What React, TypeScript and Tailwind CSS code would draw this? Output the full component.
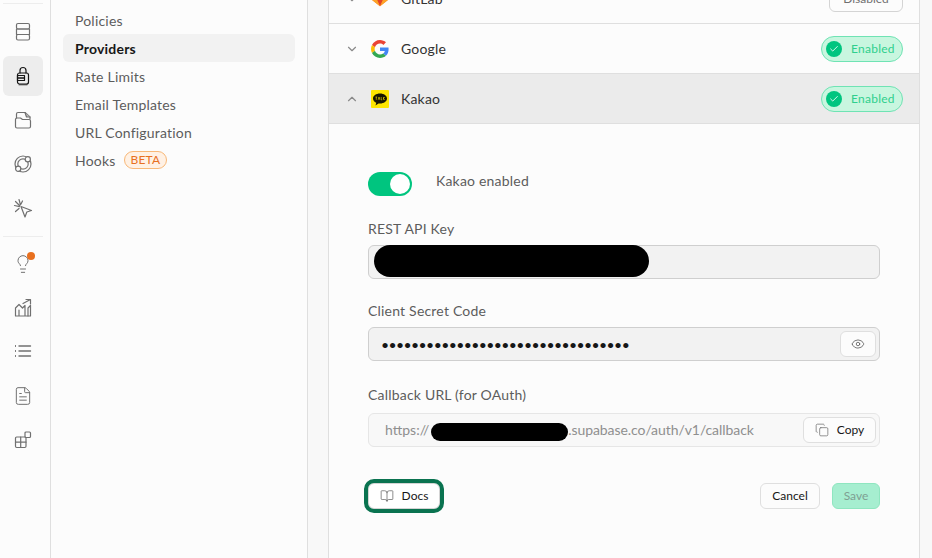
import React from "react";
import { ChevronDown, ChevronUp, Eye, Copy, BookOpen, Lightbulb, FileText, Check } from "lucide-react";

const S = { fill: "none", stroke: "currentColor", strokeWidth: 1.2, strokeLinecap: "round" as const, strokeLinejoin: "round" as const };

function Ico({ children }: { children: React.ReactNode }) {
  return <svg width="20" height="20" viewBox="0 0 20 20" {...S}>{children}</svg>;
}

const DbIcon = () => (
  <Ico>
    <rect x="3.500" y="1.500" width="13" height="5.500" rx="1.500" />
    <rect x="3.500" y="7" width="13" height="5.500" />
    <rect x="3.500" y="12.500" width="13" height="5.500" rx="1.500" />
  </Ico>
);
const AuthIcon = () => (
  <Ico>
    <path d="M7 7V4.500a3 3 0 0 1 6 0V7" />
    <rect x="4.500" y="7" width="11" height="11" rx="2" />
    <rect x="4.500" y="9.500" width="7" height="2.500" />
    <rect x="4.500" y="12" width="7" height="2.500" />
    <path d="M6 18.800h8" strokeWidth="0.800" />
  </Ico>
);
const StorageIcon = () => (
  <Ico>
    <path d="M3.500 8V4a1.500 1.500 0 0 1 1.500-1.500h7L17 7v2" />
    <path d="M2.500 9.500A1.500 1.500 0 0 1 4 8h3.500l2 1.500h6.500A1.500 1.500 0 0 1 17.500 11v5.500A1.500 1.500 0 0 1 16 18H4a1.500 1.500 0 0 1-1.500-1.500z" />
    <path d="M12 2.500 13.500 7H17" fill="#bdbdbd" />
  </Ico>
);
const RealtimeIcon = () => (
  <Ico>
    <circle cx="10" cy="10" r="8" />
    <circle cx="10" cy="10" r="5.200" />
    <circle cx="14.800" cy="5.200" r="2.600" fill="#fcfcfc" />
    <circle cx="5.200" cy="14.800" r="2.600" fill="#fcfcfc" />
  </Ico>
);
const EdgeIcon = () => (
  <Ico>
    <path d="M8 8.500 18.500 12.500l-4.700 1.500L12 19z" />
    <path d="M6 1.500 7.500 7M1.500 7.500l5 1.200M9.500 3 8 6M2.500 13.500l3.500-3M2.500 3.500 6.500 7.500" />
  </Ico>
);
const ReportsIcon = () => (
  <Ico>
    <path d="M2.500 18V10l3.500-3.500 3.500 3.500 2.500-2.500V18M2.500 18h15V7.500M6 18v-6M12 18v-5.500" />
    <path d="M10 5.500 16.500 2M13 1.500h4.500V6" />
    <path d="M15 18v-8l2.500-2.500" />
  </Ico>
);
const ListIcon = () => (
  <Ico>
    <path d="M6 4h11.500M6 9h11.500M6 14h11.500M6 11.500" strokeWidth="1.400" />
    <path d="M2.500 3.500v1M2.500 8.500v1M2.500 13.500v1" strokeWidth="1" />
  </Ico>
);
const IntegrationIcon = () => (
  <Ico>
    <rect x="2.500" y="7" width="10.500" height="10.500" rx="1.200" />
    <path d="M7.700 7v10.500M2.500 12.200h10.500" />
    <rect x="12" y="2" width="5.500" height="5.500" rx="1" />
  </Ico>
);

function Rail({ active, children, dot }: { active?: boolean; children: React.ReactNode; dot?: boolean }) {
  return (
    <div className={`relative flex h-10 w-10 items-center justify-center rounded-md ${active ? "bg-[#ededed] text-[#171717]" : "text-[#707070]"}`}>
      {children}
      {dot && <span className="absolute left-[24px] top-[8px] h-2 w-2 rounded-full bg-[#e8701f]" />}
    </div>
  );
}

function Enabled() {
  return (
    <div className="flex h-[26px] w-[82px] items-center rounded-full border border-[#6fe3b4] bg-[#c8f6df] pl-[4px] text-[12px] tracking-[0.25px] text-[#2fcf8d]">
      <span className="flex h-4 w-4 items-center justify-center rounded-full bg-[#00c57f] text-white">
        <Check size={10} strokeWidth={2} />
      </span>
      <span className="ml-[9px]">Enabled</span>
    </div>
  );
}

const GoogleLogo = () => (
  <svg width="18" height="18" viewBox="0 0 48 48">
    <path fill="#EA4335" d="M24 9.500c3.500 0 6.700 1.300 9.100 3.500l6.800-6.800C35.800 2.400 30.200 0 24 0 14.600 0 6.500 5.400 2.600 13.200l7.900 6.100C12.400 13.700 17.700 9.500 24 9.500z" />
    <path fill="#4285F4" d="M46.900 24.500c0-1.600-.1-3.100-.4-4.500H24v9h12.900c-.6 3-2.200 5.500-4.700 7.200l7.700 6c4.500-4.200 7-10.300 7-17.700z" />
    <path fill="#FBBC05" d="M10.500 28.700A14.400 14.400 0 0 1 9.700 24c0-1.600.3-3.200.8-4.700l-7.900-6.100A24 24 0 0 0 0 24c0 3.900.9 7.500 2.600 10.800z" />
    <path fill="#34A853" d="M24 48c6.500 0 11.900-2.100 15.900-5.800l-7.700-6c-2.200 1.500-4.900 2.300-8.200 2.300-6.300 0-11.600-4.200-13.500-9.800l-7.900 6.100C6.500 42.600 14.600 48 24 48z" />
  </svg>
);

const KakaoLogo = () => (
  <svg width="18" height="18" viewBox="0 0 18 18">
    <rect width="18" height="18" rx="1" fill="#fee500" />
    <path d="M9 3.500c-4 0-7 2.200-7 5 0 1.800 1.300 3.400 3.200 4.300l-.7 2.600 3-2c.5.100 1 .1 1.500.1 4 0 7-2.200 7-5s-3-5-7-5z" fill="#191600" />
    <path d="M4.500 7h1.600M5.300 7v2.800M7.200 9.800 8 7l.8 2.800M10.200 7v2.800h1M12.500 7v2.800M12.500 8.500l1.200-1.500M12.500 8.500l1.200 1.300" stroke="#fee500" strokeWidth=".6" fill="none" />
  </svg>
);

const GitlabLogo = () => (
  <svg width="22" height="22" viewBox="0 0 22 22">
    <path d="M11 20 1 12 3.500 3l3 7h9l3-7L21 12z" fill="#fc6d26" />
    <path d="M11 20 6.500 10h9z" fill="#e24329" />
    <path d="M11 20 1 12l5.500-2zM11 20l10-8-5.500-2z" fill="#fca326" />
  </svg>
);

function Row({ open, logo, name, badge }: { open?: boolean; logo: React.ReactNode; name: string; badge: React.ReactNode }) {
  return (
    <div className={`flex h-[50px] items-center border-b border-[#dfdfdf] pl-[16px] pr-4 ${open ? "bg-[#ebebeb]" : ""}`}>
      {open ? <ChevronUp size={14} className="text-[#8a8a8a]" /> : <ChevronDown size={14} className="text-[#8a8a8a]" />}
      <span className="ml-[12px] flex w-[18px] items-center justify-center">{logo}</span>
      <span className="ml-[12px] flex-1 text-[14px] tracking-[0.2px] text-[#333]">{name}</span>
      {badge}
    </div>
  );
}

function Label({ children }: { children: React.ReactNode }) {
  return <div className="h-[20px] text-[14px] leading-[20px] tracking-[0.2px] text-[#5c5c5c]">{children}</div>;
}

const dots = "•••••••••••••••••••••••••••••••••";

export default function App() {
  return (
    <div className="flex h-[558px] w-[932px] overflow-hidden bg-[#f8f8f8]" style={{ fontFamily: "Lato, sans-serif" }}>
      <aside className="flex w-[51px] shrink-0 flex-col items-start border-r border-[#dfdfdf] bg-[#fcfcfc] pl-[3px] pt-[3px]">
        <div className="h-px w-10 bg-[#ededed]" />
        <div className="mt-[8px] flex flex-col gap-1">
          <Rail><DbIcon /></Rail>
          <Rail active><AuthIcon /></Rail>
          <Rail><StorageIcon /></Rail>
          <Rail><RealtimeIcon /></Rail>
          <Rail><EdgeIcon /></Rail>
        </div>
        <div className="mt-[8px] h-px w-10 bg-[#ededed]" />
        <div className="mt-[7px] flex flex-col gap-1">
          <Rail dot><Lightbulb size={20} strokeWidth={1.2} /></Rail>
          <Rail><ReportsIcon /></Rail>
          <Rail><ListIcon /></Rail>
          <Rail><FileText size={20} strokeWidth={1.2} /></Rail>
          <Rail><IntegrationIcon /></Rail>
        </div>
      </aside>

      <nav className="flex w-[257px] shrink-0 flex-col border-r border-[#dfdfdf] bg-[#fcfcfc] pl-3 pr-3 pt-[6px] text-[14px] tracking-[0.2px] text-[#5c5c5c]">
        <div className="flex h-7 items-center px-3">Policies</div>
        <div className="flex h-7 items-center rounded-md bg-[#f2f2f2] px-3 font-bold text-[#171717]">Providers</div>
        <div className="flex h-7 items-center px-3">Rate Limits</div>
        <div className="flex h-7 items-center px-3">Email Templates</div>
        <div className="flex h-7 items-center px-3">URL Configuration</div>
        <div className="flex h-7 items-center px-3">
          Hooks
          <span className="ml-[8px] flex h-[18px] items-center rounded-full border border-[#f8b878] bg-[#fff1e4] px-[6px] text-[12px] text-[#e8701f]">BETA</span>
        </div>
      </nav>

      <main className="min-w-0 flex-1 pl-5 pr-3">
        <div className="-mt-[27px] h-[600px] w-[592px] border border-[#dfdfdf] bg-[#fcfcfc]">
          <Row
            logo={<GitlabLogo />}
            name="GitLab"
            badge={<div className="flex h-[26px] w-[74px] items-center justify-center rounded-md border border-[#d4d4d4] text-[12px] text-[#707070]">Disabled</div>}
          />
          <Row logo={<GoogleLogo />} name="Google" badge={<Enabled />} />
          <Row open logo={<KakaoLogo />} name="Kakao" badge={<Enabled />} />

          <div className="px-[39px] pt-[48px]">
            <div className="flex items-start">
              <div className="flex h-6 w-11 items-center justify-end rounded-full bg-[#00c57f] pr-[2px]">
                <span className="h-5 w-5 rounded-full bg-white" />
              </div>
              <span className="ml-6 mt-[-1px] text-[14px] leading-[20px] tracking-[0.2px] text-[#5c5c5c]">Kakao enabled</span>
            </div>

            <div className="mt-[23px]">
              <Label>REST API Key</Label>
              <div className="relative mt-[6px] h-[34px] rounded-md border border-[#cfcfcf] bg-[#f2f2f2]">
                <span className="absolute left-[5px] top-[-1px] h-[32px] w-[275px] rounded-full bg-black" />
              </div>
            </div>

            <div className="mt-[22px]">
              <Label>Client Secret Code</Label>
              <div className="mt-[6px] flex h-[34px] items-center justify-between rounded-md border border-[#cfcfcf] bg-[#f2f2f2] pl-[12px] pr-[3px]">
                <span className="text-[14px] tracking-[-0.6px] text-[#171717]">{dots}</span>
                <button className="flex h-[26px] w-[36px] items-center justify-center rounded-md border border-[#dfdfdf] bg-[#fcfcfc] text-[#5c5c5c]">
                  <Eye size={14} strokeWidth={1.4} />
                </button>
              </div>
            </div>

            <div className="mt-[24px]">
              <Label>Callback URL (for OAuth)</Label>
              <div className="relative mt-[8px] flex h-[34px] items-center justify-between rounded-md border border-[#e6e6e6] bg-[#f8f8f8] pl-[16px] pr-[3px]">
                <span className="text-[14px] text-[#8f8f8f]">
                  https://<span className="ml-[2px] inline-block h-[18px] w-[137px] rounded-full bg-black align-middle" /><span className="tracking-[-0.07px]">.supabase.co/auth/v1/callback</span>
                </span>
                <button className="flex h-[26px] w-[73px] items-center justify-center gap-2 rounded-md border border-[#dfdfdf] bg-[#fcfcfc] text-[12px] text-[#171717]">
                  <Copy size={14} strokeWidth={1.3} className="text-[#707070]" />
                  Copy
                </button>
              </div>
            </div>

            <div className="mt-[36px] flex items-center justify-between">
              <button className="flex h-[26px] w-[72px] items-center justify-center gap-2 rounded-md border border-[#d4d4d4] bg-white text-[12px] text-[#171717] outline-4 outline-[#0a7350]">
                <BookOpen size={14} strokeWidth={1.2} className="text-[#5c5c5c]" />
                Docs
              </button>
              <div className="flex items-center gap-3">
                <button className="flex h-[26px] w-[60px] items-center justify-center rounded-md border border-[#dfdfdf] bg-[#fcfcfc] text-[12px] text-[#171717]">Cancel</button>
                <button className="flex h-[26px] w-[48px] items-center justify-center rounded-md border border-[#8fe6c0] bg-[#a6eed0] text-[12px] text-[#7f9f92]">Save</button>
              </div>
            </div>
          </div>
        </div>
      </main>
    </div>
  );
}
